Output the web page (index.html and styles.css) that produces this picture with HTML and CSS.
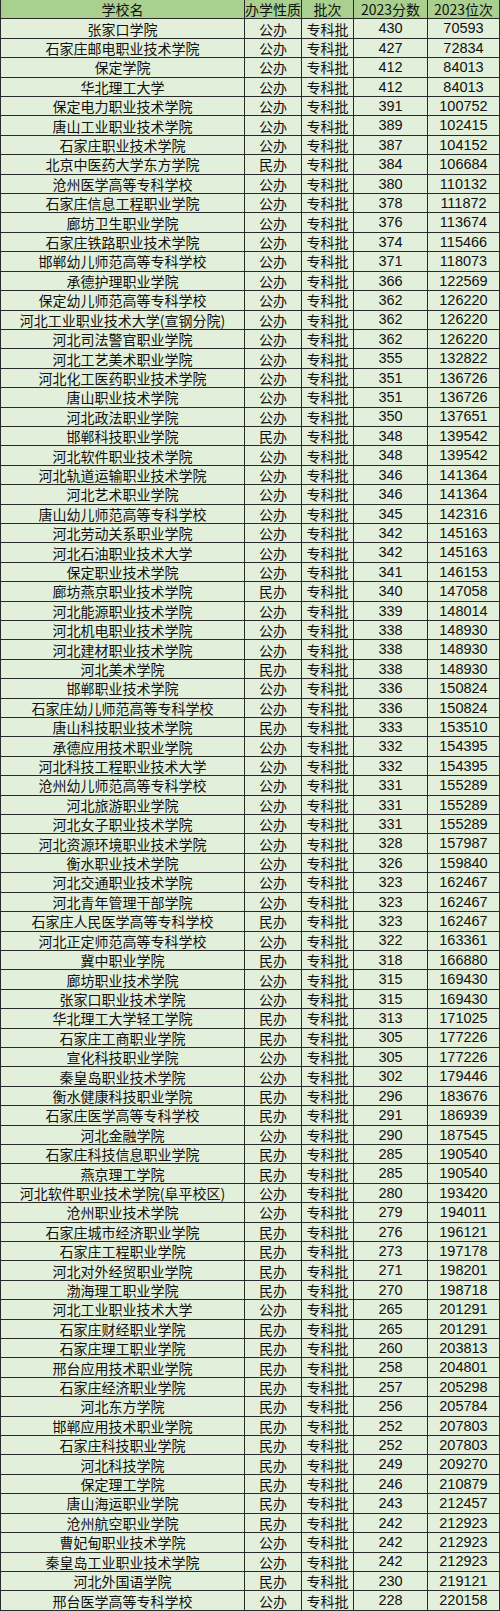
FILE: index.html
```html
<!DOCTYPE html>
<html lang="zh">
<head>
<meta charset="utf-8">
<link rel="stylesheet" href="styles.css">
</head>
<body>
<div class="table" id="t">
<div class="c h">学校名</div><div class="c h">办学性质</div><div class="c h">批次</div><div class="c h">2023分数</div><div class="c h">2023位次</div>
</div>
<script src="data.js"></script>
</body>
</html>
```
FILE: data.js
```js
var rows = [
["张家口学院","公办","430","70593"],
["石家庄邮电职业技术学院","公办","427","72834"],
["保定学院","公办","412","84013"],
["华北理工大学","公办","412","84013"],
["保定电力职业技术学院","公办","391","100752"],
["唐山工业职业技术学院","公办","389","102415"],
["石家庄职业技术学院","公办","387","104152"],
["北京中医药大学东方学院","民办","384","106684"],
["沧州医学高等专科学校","公办","380","110132"],
["石家庄信息工程职业学院","公办","378","111872"],
["廊坊卫生职业学院","公办","376","113674"],
["石家庄铁路职业技术学院","公办","374","115466"],
["邯郸幼儿师范高等专科学校","公办","371","118073"],
["承德护理职业学院","公办","366","122569"],
["保定幼儿师范高等专科学校","公办","362","126220"],
["河北工业职业技术大学(宣钢分院)","公办","362","126220"],
["河北司法警官职业学院","公办","362","126220"],
["河北工艺美术职业学院","公办","355","132822"],
["河北化工医药职业技术学院","公办","351","136726"],
["唐山职业技术学院","公办","351","136726"],
["河北政法职业学院","公办","350","137651"],
["邯郸科技职业学院","民办","348","139542"],
["河北软件职业技术学院","公办","348","139542"],
["河北轨道运输职业技术学院","公办","346","141364"],
["河北艺术职业学院","公办","346","141364"],
["唐山幼儿师范高等专科学校","公办","345","142316"],
["河北劳动关系职业学院","公办","342","145163"],
["河北石油职业技术大学","公办","342","145163"],
["保定职业技术学院","公办","341","146153"],
["廊坊燕京职业技术学院","民办","340","147058"],
["河北能源职业技术学院","公办","339","148014"],
["河北机电职业技术学院","公办","338","148930"],
["河北建材职业技术学院","公办","338","148930"],
["河北美术学院","民办","338","148930"],
["邯郸职业技术学院","公办","336","150824"],
["石家庄幼儿师范高等专科学校","公办","336","150824"],
["唐山科技职业技术学院","民办","333","153510"],
["承德应用技术职业学院","公办","332","154395"],
["河北科技工程职业技术大学","公办","332","154395"],
["沧州幼儿师范高等专科学校","公办","331","155289"],
["河北旅游职业学院","公办","331","155289"],
["河北女子职业技术学院","公办","331","155289"],
["河北资源环境职业技术学院","公办","328","157987"],
["衡水职业技术学院","公办","326","159840"],
["河北交通职业技术学院","公办","323","162467"],
["河北青年管理干部学院","公办","323","162467"],
["石家庄人民医学高等专科学校","民办","323","162467"],
["河北正定师范高等专科学校","公办","322","163361"],
["冀中职业学院","民办","318","166880"],
["廊坊职业技术学院","公办","315","169430"],
["张家口职业技术学院","公办","315","169430"],
["华北理工大学轻工学院","民办","313","171025"],
["石家庄工商职业学院","民办","305","177226"],
["宣化科技职业学院","公办","305","177226"],
["秦皇岛职业技术学院","公办","302","179446"],
["衡水健康科技职业学院","民办","296","183676"],
["石家庄医学高等专科学校","民办","291","186939"],
["河北金融学院","公办","290","187545"],
["石家庄科技信息职业学院","民办","285","190540"],
["燕京理工学院","民办","285","190540"],
["河北软件职业技术学院(阜平校区)","公办","280","193420"],
["沧州职业技术学院","公办","279","194011"],
["石家庄城市经济职业学院","民办","276","196121"],
["石家庄工程职业学院","民办","273","197178"],
["河北对外经贸职业学院","民办","271","198201"],
["渤海理工职业学院","民办","270","198718"],
["河北工业职业技术大学","公办","265","201291"],
["石家庄财经职业学院","民办","265","201291"],
["石家庄理工职业学院","民办","260","203813"],
["邢台应用技术职业学院","民办","258","204801"],
["石家庄经济职业学院","民办","257","205298"],
["河北东方学院","民办","256","205784"],
["邯郸应用技术职业学院","民办","252","207803"],
["石家庄科技职业学院","民办","252","207803"],
["河北科技学院","民办","249","209270"],
["保定理工学院","民办","246","210879"],
["唐山海运职业学院","民办","243","212457"],
["沧州航空职业学院","民办","242","212923"],
["曹妃甸职业技术学院","公办","242","212923"],
["秦皇岛工业职业技术学院","公办","242","212923"],
["河北外国语学院","民办","230","219121"],
["邢台医学高等专科学校","公办","228","220158"]
];
var t = document.getElementById("t");
var html = "";
rows.forEach(function (r) {
  html += '<div class="c">' + r[0] + '</div><div class="c">' + r[1] +
    '</div><div class="c">专科批</div><div class="c n">' + r[2] +
    '</div><div class="c n">' + r[3] + '</div>';
});
t.insertAdjacentHTML("beforeend", html);
```
FILE: styles.css
```css
html, body {
  margin: 0;
  padding: 0;
  background: #e2efda;
}
.table {
  display: grid;
  grid-template-columns: 245px 57px 52px 74px 72px;
  grid-auto-rows: calc(1611px / 83);
  width: 500px;
  font-family: "Noto Sans CJK SC", "Liberation Sans", sans-serif;
  font-size: 14px;
  color: #111;
  background: #e2efda;
}
.c {
  display: flex;
  align-items: center;
  justify-content: center;
  border-right: 1px solid #2a2a2a;
  border-bottom: 1px solid #2a2a2a;
  box-sizing: border-box;
  white-space: nowrap;
  overflow: hidden;
  line-height: 1;
}
.c:nth-child(5n+1) {
  border-left: 1px solid #2a2a2a;
}
.h {
  background: #a9d08e;
}
.n {
  font-family: "Liberation Sans", "Noto Sans CJK SC", sans-serif;
  font-size: 14.5px;
}
```
